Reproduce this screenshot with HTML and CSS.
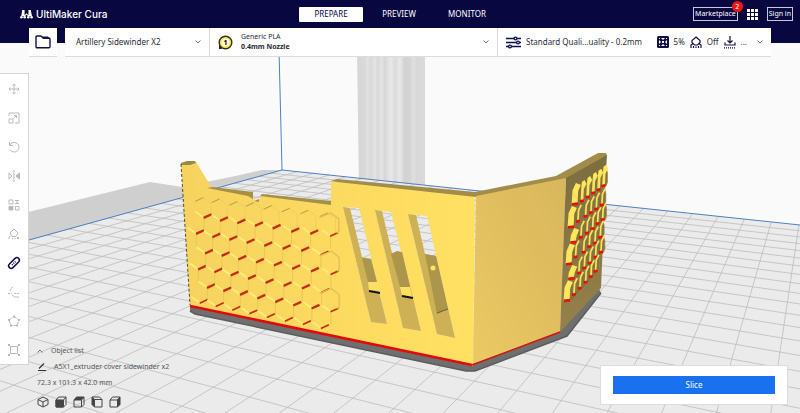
FILE: index.html
```html
<!DOCTYPE html>
<html lang="en">
<head>
  <meta charset="UTF-8" />
  <meta name="viewport" content="width=device-width, initial-scale=1.0"/>
  <title>UltiMaker Cura</title>
  <link rel="stylesheet" href="styles.css">
</head>
<body>
  <svg class="scene" viewBox="0 0 800 413" preserveAspectRatio="xMidYMid slice" aria-hidden="true">
    <defs>
      <linearGradient id="pillar">
        <stop offset="0" stop-color="#d6d6d6"/><stop offset=".12" stop-color="#d9d9d9"/>
        <stop offset=".15" stop-color="#e2e2e2"/><stop offset=".2" stop-color="#d9d9d9"/>
        <stop offset=".27" stop-color="#e4e4e4"/><stop offset=".3" stop-color="#d8d8d8"/>
        <stop offset=".37" stop-color="#e4e4e4"/><stop offset=".4" stop-color="#d6d6d6"/>
        <stop offset=".5" stop-color="#e8e8e8"/><stop offset=".56" stop-color="#dadada"/>
        <stop offset=".63" stop-color="#e8e8e8"/><stop offset=".7" stop-color="#d2d2d2"/>
        <stop offset=".78" stop-color="#d4d4d4"/><stop offset=".83" stop-color="#e0e0e0"/>
        <stop offset=".87" stop-color="#d8d8d8"/><stop offset="1" stop-color="#dadada"/>
      </linearGradient>
      <linearGradient id="front">
        <stop offset="0" stop-color="#f6d35f"/><stop offset=".5" stop-color="#fcd95f"/><stop offset="1" stop-color="#ffe162"/>
      </linearGradient>
      <linearGradient id="side" x1="0" y1="1" x2="1" y2="0">
        <stop offset="0" stop-color="#ebc963"/><stop offset="1" stop-color="#d8b65c"/>
      </linearGradient>
      <linearGradient id="back" x1="0" y1="0" x2="0" y2="1">
        <stop offset="0" stop-color="#7b6d3e"/><stop offset="1" stop-color="#96814a"/>
      </linearGradient>
    </defs>
    <!-- printer parts behind the plate -->
    <path d="M0 219 150 182 182 187 240 175 262 170H282L0 249Z" fill="#cfcfcf"/>
    <path d="M357 50H425V190H359Z" fill="url(#pillar)"/>
    <path d="M282 170 800 225V413H0V249Z" fill="#ebebeb"/>
    <g id="grid" stroke="#bdbdbd" stroke-width=".8"></g>
    <path d="M279 50 282 170M0 248 282 170 800 225" fill="none" stroke="#4f7fc0"/>
    <!-- model -->
    <path d="M190 305V311L195 314 466 371 475 371 567 336 601 293 598 287 560 330 473 362Z" fill="#6f6f6f"/>
    <path d="M190 311 195 314 466 371 475 371 567 336 601 293" fill="none" stroke="#5c5c5c" stroke-width="1.5"/>
    <path fill="url(#front)" fill-rule="evenodd" d="M181 163 196 162 212 188 253 195 254 201H259L261 196 331 204V181L475 195 473 366 190 306Z
      M343 207 359 208 387 324 371 322Z M375 210 391 212 421 331 403 328Z M408 214 427 216 455 338 437 334Z"/>
    <path d="M207 188 213 187 253 192V199L248 196ZM260 196 262 194 331 201V205ZM254 201 259 199 259 202Z" fill="#a59048"/>
    <path d="M181 163 187 161 195 161 196 163 190 165 181 165Z" fill="#9b8845"/>
    <path d="M331 181 337 179 475 192 556 176 598 153 606 153 607 156 566 179 476 197 337 182Z" fill="#a18d49"/>
    <!-- slots -->
    <path d="M343 207 350 208 362 257 371 259 387 324 371 322ZM375 210 382 211 392 253 402 252 421 331 403 328ZM408 214 416 215 425 254 436 256 455 338 437 334Z" fill="#ceb155"/>
    <path d="M362 258 371 259 377 282 368 282ZM391 254 397 251 402 252 410 287 400 287ZM425 254 436 256 448 309 437 314Z" fill="#ac964c"/>
    <path d="M368 282H377L380 291 369 290ZM400 287H410L412 297 402 295Z" fill="#ffe062"/>
    <path d="M369 291 380 293M402 296 413 298" stroke="#141414" stroke-width="2"/>
    <path d="M437 313 448 309" stroke="#6d6138"/>
    <circle cx="433" cy="268" r="2.5" fill="#ffe666"/>
    <path d="M181 164 190 305" stroke="#5b4d24" stroke-dasharray="3 2"/>
    <path d="M190 306 472 365" stroke="#e40909" stroke-width="2.5"/>
    <g id="honeycomb" transform="translate(170 140) scale(.333)" fill="none"></g>
    <path d="M476 196 566 178 560 332 473 364Z" fill="url(#side)"/>
    <path d="M472 365 560 332" stroke="#d31212" stroke-width="1.5"/>
    <path d="M566 178 607 155 606 170 601 288 560 332Z" fill="url(#back)"/>
    <g id="comb-side" transform="translate(460 140) scale(.333)"></g>
  </svg>

  <div class="top">
    <header class="header">
      <div class="brand">
        <svg width="13" height="9" viewBox="0 0 13 9" fill="#fff"><path d="M2.2 0H4.6V5.2L6.5 3.2 8.4 5.2V0H10.8L12 6.2H9.6L8.3 6.6 6.5 4.8 4.7 6.6 3.4 6.2H1.2Z"/><circle cx="1.4" cy="7.2" r="1.3"/><circle cx="4.7" cy="7.2" r="1.3"/><circle cx="8.3" cy="7.2" r="1.3"/><circle cx="11.6" cy="7.2" r="1.3"/></svg>
        <span>UltiMaker Cura</span>
      </div>
      <nav class="tabs">
        <button class="tab active">PREPARE</button>
        <button class="tab">PREVIEW</button>
        <button class="tab">MONITOR</button>
      </nav>
      <div class="account">
        <button class="outline">Marketplace<span class="badge">2</span></button>
        <button class="apps" aria-label="Applications">
          <svg width="11" height="11" viewBox="0 0 11 11" fill="#fff"><path d="M0 0h3v3H0zM4 0h3v3H4zM8 0h3v3H8zM0 4h3v3H0zM4 4h3v3H4zM8 4h3v3H8zM0 8h3v3H0zM4 8h3v3H4zM8 8h3v3H8z"/></svg>
        </button>
        <button class="outline">Sign in</button>
      </div>
    </header>

    <div class="stage">
      <button class="open" aria-label="Open file">
        <svg width="16" height="14" viewBox="0 0 16 14" fill="none" stroke="#10104a" stroke-width="1.4" stroke-linejoin="round"><path d="M1 2.2Q1 1 2.2 1H6L8 3H13.8Q15 3 15 4.2V11.5Q15 12.7 13.8 12.7H2.2Q1 12.7 1 11.5Z"/><path d="M7 1.5H13L14.5 4H9Z" fill="#10104a" stroke="none"/></svg>
      </button>
      <div class="setup">
        <button class="cell">
          <span class="grow">Artillery Sidewinder X2</span>
          <svg class="chevron" viewBox="0 0 6 4"><path d="M.5.5 3 3 5.5.5"/></svg>
        </button>
        <button class="cell material">
          <svg width="15" height="15" viewBox="0 0 15 15"><path d="M1 7V14H4Z" fill="#222"/><circle cx="7.5" cy="7.5" r="6.3" fill="#ffe44d" stroke="#33301c" stroke-width="1.4"/><circle cx="7.5" cy="7.5" r="4" fill="#fffbe0"/><text x="7.5" y="10" text-anchor="middle" class="spool">1</text></svg>
          <span class="grow small">Generic PLA<br><b>0.4mm Nozzle</b></span>
          <svg class="chevron" viewBox="0 0 6 4"><path d="M.5.5 3 3 5.5.5"/></svg>
        </button>
        <button class="cell profile">
          <svg width="15" height="13" viewBox="0 0 15 13" fill="#fff" stroke="#10104a" stroke-width="1.3"><path d="M0 2.5H15M0 6.5H15M0 10.5H15"/><circle cx="9.5" cy="2.5" r="1.4"/><circle cx="12" cy="6.5" r="1.4"/><circle cx="4" cy="10.5" r="1.4"/></svg>
          <span class="grow">Standard Quali...uality - 0.2mm</span>
          <svg width="12" height="12" viewBox="0 0 12 12"><rect width="12" height="12" rx="1.5" fill="#10104a"/><path d="M4 2H8L6 4ZM4 10H8L6 8ZM2 4V8L4 6ZM10 4V8L8 6Z" fill="#fff"/><path d="M2 2 3 3M10 2 9 3M2 10 3 9M10 10 9 9M5 5 7 7M7 5 5 7" stroke="#fff"/></svg>
          <span>5%</span>
          <svg width="12" height="13" viewBox="0 0 12 13" fill="none" stroke="#10104a" stroke-width="1.2"><path d="M6 1 10 4.5V6.5L7.5 9H4.5L2 6.5V4.5Z"/><path d="M1 12V9L3 7.5M11 12V9L9 7.5M3.5 12V10M6 12V10.5M8.5 12V10"/></svg>
          <span>Off</span>
          <svg width="12" height="13" viewBox="0 0 12 13" fill="none" stroke="#10104a" stroke-width="1.2"><path d="M6 0V6.5M3.5 4.5 6 7 8.5 4.5M1 6.5V9H11V6.5"/><path d="M0 11.8H12" stroke-dasharray="1 1"/></svg>
          <span>...</span>
          <svg class="chevron" viewBox="0 0 6 4"><path d="M.5.5 3 3 5.5.5"/></svg>
        </button>
      </div>
    </div>
  </div>

  <main class="workspace">
    <div class="toolbar">
      <button aria-label="Move"><svg viewBox="0 0 12 12"><path d="M6 1V11M1 6H11M4.5 2.5 6 1 7.5 2.5M4.5 9.5 6 11 7.5 9.5M2.5 4.5 1 6 2.5 7.5M9.5 4.5 11 6 9.5 7.5"/></svg></button>
      <button aria-label="Scale"><svg viewBox="0 0 12 12"><path d="M1 4V1H11V11H7M1 7H5V11H1ZM5.5 6.5 8.5 3.5M6 3.5H8.5V6"/></svg></button>
      <button aria-label="Rotate"><svg viewBox="0 0 12 12"><path d="M1.5 1V4.5H5M1.8 4.3A4.8 4.8 0 1 1 2 8.5"/></svg></button>
      <button aria-label="Mirror"><svg viewBox="0 0 12 12"><path d="M6 0V12M1 3V9L4 6Z"/><path d="M11.5 3V9L8 6Z" fill="#b9b9c3"/></svg></button>
      <button aria-label="Per model settings"><svg viewBox="0 0 12 12"><path d="M1 1H5V5H1ZM7.5 7.5H11V11H7.5ZM7 1.5H11M7 4.5H11M9 1V5"/><path d="M1 7.5H5V11H1Z" fill="#b9b9c3"/></svg></button>
      <button aria-label="Support blocker"><svg viewBox="0 0 12 12"><path d="M6 1 10 5 8 8.5H4L2 5ZM1 11V9L2.5 8M4.5 11V10M7 11V10M9 9 11 11M11 9 9 11"/></svg></button>
      <button class="on" aria-label="Measure"><svg viewBox="0 0 12 12"><rect x="-.5" y="3.5" width="13" height="5" rx="2.5" transform="rotate(-45 6 6)"/><path d="M4 8 8 4" stroke-dasharray="1 1"/></svg></button>
      <button aria-label="Fade"><svg viewBox="0 0 12 12"><path d="M5 1Q1 3 3 6M0 7.5H4M6 7.5H12" stroke-dasharray="2 1"/><path d="M4 9Q6 12 11 11"/></svg></button>
      <button aria-label="Polygon"><svg viewBox="0 0 12 12"><path d="M6 1.5 11 5 9 10.5H3L1 5Z" stroke-dasharray="3 1"/><path d="M5 .5H7V2.5H5ZM0 4H2V6H0ZM10 4H12V6H10ZM2 9.5H4V11.5H2ZM8 9.5H10V11.5H8Z" fill="#b9b9c3" stroke="none"/></svg></button>
      <button aria-label="Frame"><svg viewBox="0 0 12 12"><path d="M2.5 2.5H9.5V9.5H2.5ZM0 0 2.5 2.5M12 0 9.5 2.5M0 12 2.5 9.5M12 12 9.5 9.5"/><path d="M0 0H2V2H0ZM10 0H12V2H10ZM0 10H2V12H0ZM10 10H12V12H10Z" fill="#b9b9c3" stroke="none"/></svg></button>
    </div>

    <section class="objects">
      <button class="line"><svg class="chevron" viewBox="0 0 6 4"><path d="M.5 3.5 3 1 5.5 3.5"/></svg>Object list</button>
      <div class="line"><svg width="9" height="8" viewBox="0 0 9 8" fill="none" stroke="#333"><path d="M2 5.5 7 .5M1 7.5H9" stroke-width="1.2"/></svg>A5X1_extruder cover sidewinder x2</div>
      <div class="line">72.3 x 101.3 x 42.0 mm</div>
      <div class="views">
        <button aria-label="3D view"><svg viewBox="0 0 12 12"><path d="M6 1 11 3.5V8.5L6 11 1 8.5V3.5ZM1 3.5 6 6 11 3.5M6 6V11"/></svg></button>
        <button aria-label="Front view"><svg viewBox="0 0 12 12"><path d="M1 4 3.5 1H11V8.5L8.5 11H1ZM8.5 4 11 1"/><path d="M1 4H8.5V11H1Z" fill="#444"/></svg></button>
        <button aria-label="Top view"><svg viewBox="0 0 12 12"><path d="M1 4V11H8.5L11 8.5V1M8.5 4V11"/><path d="M1 4 3.5 1H11L8.5 4Z" fill="#444"/></svg></button>
        <button aria-label="Left view"><svg viewBox="0 0 12 12"><path d="M1 1H8.5L11 3.5V11H3.5V3.5H11"/><path d="M1 1 3.5 3.5V11L1 8.5Z" fill="#444"/></svg></button>
        <button aria-label="Right view"><svg viewBox="0 0 12 12"><path d="M1 4 3.5 1H11L8.5 4V11H1ZM1 4H8.5"/><path d="M8.5 4 11 1V8.5L8.5 11Z" fill="#444"/></svg></button>
      </div>
    </section>

    <div class="action">
      <button class="slice">Slice</button>
    </div>
  </main>

  <script src="scene.js"></script>
</body>
</html>
```
FILE: styles.css
```css
* {
  box-sizing: border-box;
}
body {
  margin: 0;
  min-height: 100vh;
  display: flex;
  flex-direction: column;
  background: #fafafa;
  color: #2b2b35;
  font-family: 'Noto Sans', sans-serif;
  font-size: 8px;
  line-height: 12px;
}
button {
  margin: 0;
  padding: 0;
  border: none;
  background: none;
  color: inherit;
  font: inherit;
  cursor: pointer;
}
svg {
  display: block;
  flex: none;
}
.scene {
  position: absolute;
  inset: 0;
  width: 100%;
  height: 100%;
  z-index: -1;
}
.top {
  background: linear-gradient(#08073f 43px, transparent 43px);
}
.header {
  display: grid;
  grid-template-columns: 1fr auto 1fr;
  align-items: center;
  height: 28px;
  padding: 0 7px 0 5px;
  color: #fff;
}
.brand {
  display: flex;
  align-items: center;
  gap: 3px;
  padding-left: 15px;
  font-family: Inter, sans-serif;
  font-size: 10px;
  font-weight: 500;
}
.tabs {
  display: flex;
  gap: 4px;
}
.tab {
  width: 64px;
  height: 15px;
  border-radius: 1px;
}
.tab.active {
  background: #fff;
  color: #08073f;
}
.account {
  display: flex;
  justify-content: flex-end;
  align-items: center;
  gap: 9px;
}
.outline {
  position: relative;
  height: 14px;
  padding: 0 1px;
  border: 1px solid #c8c8dc;
  font-size: 7px;
  line-height: 12px;
}
.badge {
  position: absolute;
  top: -7px;
  right: -6px;
  width: 11px;
  height: 11px;
  border-radius: 50%;
  background: #f01414;
  line-height: 11px;
}
.stage {
  display: flex;
  gap: 8px;
  padding: 0 29px;
}
.open {
  display: flex;
  align-items: center;
  justify-content: center;
  width: 28px;
  height: 29px;
  background: #fff;
  border-bottom: 1px solid #dcdcdc;
}
.setup {
  flex: 1;
  display: grid;
  grid-template-columns: 144fr 288fr 274fr;
  height: 29px;
  background: #fff;
  border-bottom: 1px solid #dcdcdc;
}
.cell {
  display: flex;
  align-items: center;
  min-width: 0;
  padding: 0 8px 0 11px;
  text-align: left;
  white-space: nowrap;
}
.cell + .cell {
  border-left: 1px solid #dcdcdc;
}
.grow {
  flex: 1;
}
.material {
  gap: 8px;
  padding-left: 8px;
}
.profile {
  gap: 5px;
  padding-left: 8px;
}
.profile .chevron {
  margin-left: 5px;
}
.small {
  font-size: 7px;
  line-height: 10px;
}
.spool {
  font-size: 7px;
  font-weight: 700;
}
.chevron {
  width: 6px;
  height: 4px;
  fill: none;
  stroke: #777;
}
.workspace {
  flex: 1;
  display: flex;
  align-items: flex-end;
}
.toolbar {
  display: flex;
  flex-direction: column;
  align-self: flex-start;
  width: 29px;
  margin-top: 16px;
  background: #fff;
  border: 1px solid #d4d4d4;
  border-left: none;
}
.toolbar button {
  display: flex;
  align-items: center;
  justify-content: center;
  height: 29px;
}
.toolbar svg {
  width: 12px;
  height: 12px;
  fill: none;
  stroke: #b9b9c3;
}
.toolbar .on svg {
  stroke: #10104a;
  stroke-width: 1.5;
  overflow: visible;
}
.objects {
  padding: 0 0 5px 8px;
  color: #555;
  font-size: 7px;
}
.line {
  display: flex;
  align-items: center;
  gap: 8px;
  height: 16px;
}
.views {
  display: flex;
  gap: 6px;
  padding-top: 5px;
}
.views svg {
  width: 12px;
  height: 12px;
  fill: none;
  stroke: #444;
  stroke-linejoin: round;
}
.action {
  width: 188px;
  margin: 0 12px 8px auto;
  padding: 10px 12px;
  background: #fff;
  border: 1px solid #dcdcdc;
}
.slice {
  display: block;
  width: 100%;
  height: 18px;
  background: #1971ef;
  color: #fff;
}
```
FILE: scene.js
```js
const NS = "http://www.w3.org/2000/svg";

function draw(parent, d, attrs) {
  const path = document.createElementNS(NS, "path");
  path.setAttribute("d", d);
  for (const key in attrs) path.setAttribute(key, attrs[key]);
  parent.appendChild(path);
}

// build plate in perspective: corner plus two vanishing points
const corner = [282, 170];
const vanishU = [-1152, 18];
const vanishV = [830, 18];
const stepU = -0.0106;
const stepV = -0.02;

function project(s, t) {
  const w = 1 + s + t;
  return [0, 1].map(i => ((corner[i] + s * vanishU[i] + t * vanishV[i]) / w).toFixed(1)).join(" ");
}

const grid = document.getElementById("grid");
for (let i = 1; i < 66; i++) {
  const s = i * stepU;
  draw(grid, `M${project(s, 0)}L${project(s, -0.75 - s)}`);
}
for (let j = 1; j < 36; j++) {
  const t = j * stepV;
  draw(grid, `M${project(0, t)}L${project(-0.75 - t, t)}`);
}

// raised honeycomb on the front face, one point per lower edge
const rows = [
  [[88,178],[137,182],[190,190],[240,193],[293,202],[347,210],[403,216],[462,224]],
  [[113,228],[162,237],[214,244],[267,252],[320,260],[376,270],[433,276],[493,283]],
  [[90,276],[139,286],[190,294],[242,303],[295,312],[350,321],[406,327],[464,339]],
  [[117,335],[167,342],[217,353],[270,362],[324,371],[379,381],[435,389],[494,398]],
  [[96,383],[145,391],[194,401],[246,411],[299,423],[353,432],[408,440],[466,452]],
  [[123,438],[172,448],[222,459],[274,470],[328,481],[382,491],[437,500],[494,510]],
  [[101,484],[149,494],[199,505],[250,516],[303,527],[357,538],[411,548],[465,560]]
];
const honeycomb = document.getElementById("honeycomb");
rows.forEach((row, r) => {
  row.forEach(([x, y], c) => {
    if (r > 0) {
      draw(honeycomb, `M${x - 11} ${y + 5}l-26 -18`, { stroke: "#ffee78", "stroke-width": 5 });
      if (r < 6) draw(honeycomb, `M${x - 11} ${y + 5}v38`, { stroke: "#e8c75b", "stroke-width": 3 });
    } else {
      draw(honeycomb, `M${x + 10} ${y - 5}l25 16v40`, { stroke: "#efce5e", "stroke-width": 3 });
    }
    draw(honeycomb, `M${x - 12} ${y + 6}l24 -11`, {
      stroke: r === 0 ? "#b39a45" : "#c42c10",
      "stroke-width": r === 0 ? 3 : c > 6 || r > 5 ? 5 : 7
    });
    if (c === 7 && r > 0 && r % 2 === 1) {
      draw(honeycomb, `M${x - 45} ${y - 50}l35 -14l24 18v38l-7 4`, { stroke: "#e0bf55", "stroke-width": 4 });
    }
  });
});

// honeycomb seen at an angle on the right wing
const sideRows = [
  [[345,193],[369,184],[386,172],[403,160],[419,150],[434,138]],
  [[333,262],[357,245],[380,230],[396,219],[412,208],[429,196]],
  [[340,308],[366,293],[384,280],[401,267],[416,252],[431,240]],
  [[327,373],[350,352],[374,338],[391,321],[408,310],[424,293]],
  [[334,417],[360,400],[376,385],[393,370],[410,352],[426,338]],
  [[321,483],[345,465],[363,446],[380,428],[396,411],[410,395]]
];
const firstHeights = [66, 66, 46, 64, 44, 64];
const combSide = document.getElementById("comb-side");
sideRows.forEach((row, r) => {
  row.forEach(([x, y], c) => {
    if (c === 0) {
      const h = firstHeights[r];
      draw(combSide, `M${x - 10} ${y}l3 ${24 - h}l10 -22l16 6l-9 22l-2 ${h - 32}z`, { fill: "#ffe75c" });
      draw(combSide, `M${x + 9} ${y - 6}l2 ${30 - h}l8 -18l8 14v${h - 36}l-10 14z`, { fill: "#84743f" });
    } else {
      const h = r === 0 ? 54 : 50;
      const half = c === 5 ? 4 : 8;
      draw(combSide, `M${x} ${y}l1 ${16 - h}l${half} -16l${half} 14v${h - 26}l-${half} 12z`, { fill: "#84743f", stroke: "#9c894a", "stroke-width": 2 });
      draw(combSide, `M${x - 3} ${y}l2 ${16 - h}l8 -16`, { fill: "none", stroke: "#fbe35c", "stroke-width": r === 0 ? 8 : 5 });
      if (r === 0) draw(combSide, `M${x - 5} ${y - 40}l2 -18l8 -6l6 12z`, { fill: "#ffe75c" });
    }
    draw(combSide, `M${x - 9} ${y}l${c === 0 ? 19 : 12} -2`, { stroke: "#ea0f08", "stroke-width": 8 });
  });
});
```
